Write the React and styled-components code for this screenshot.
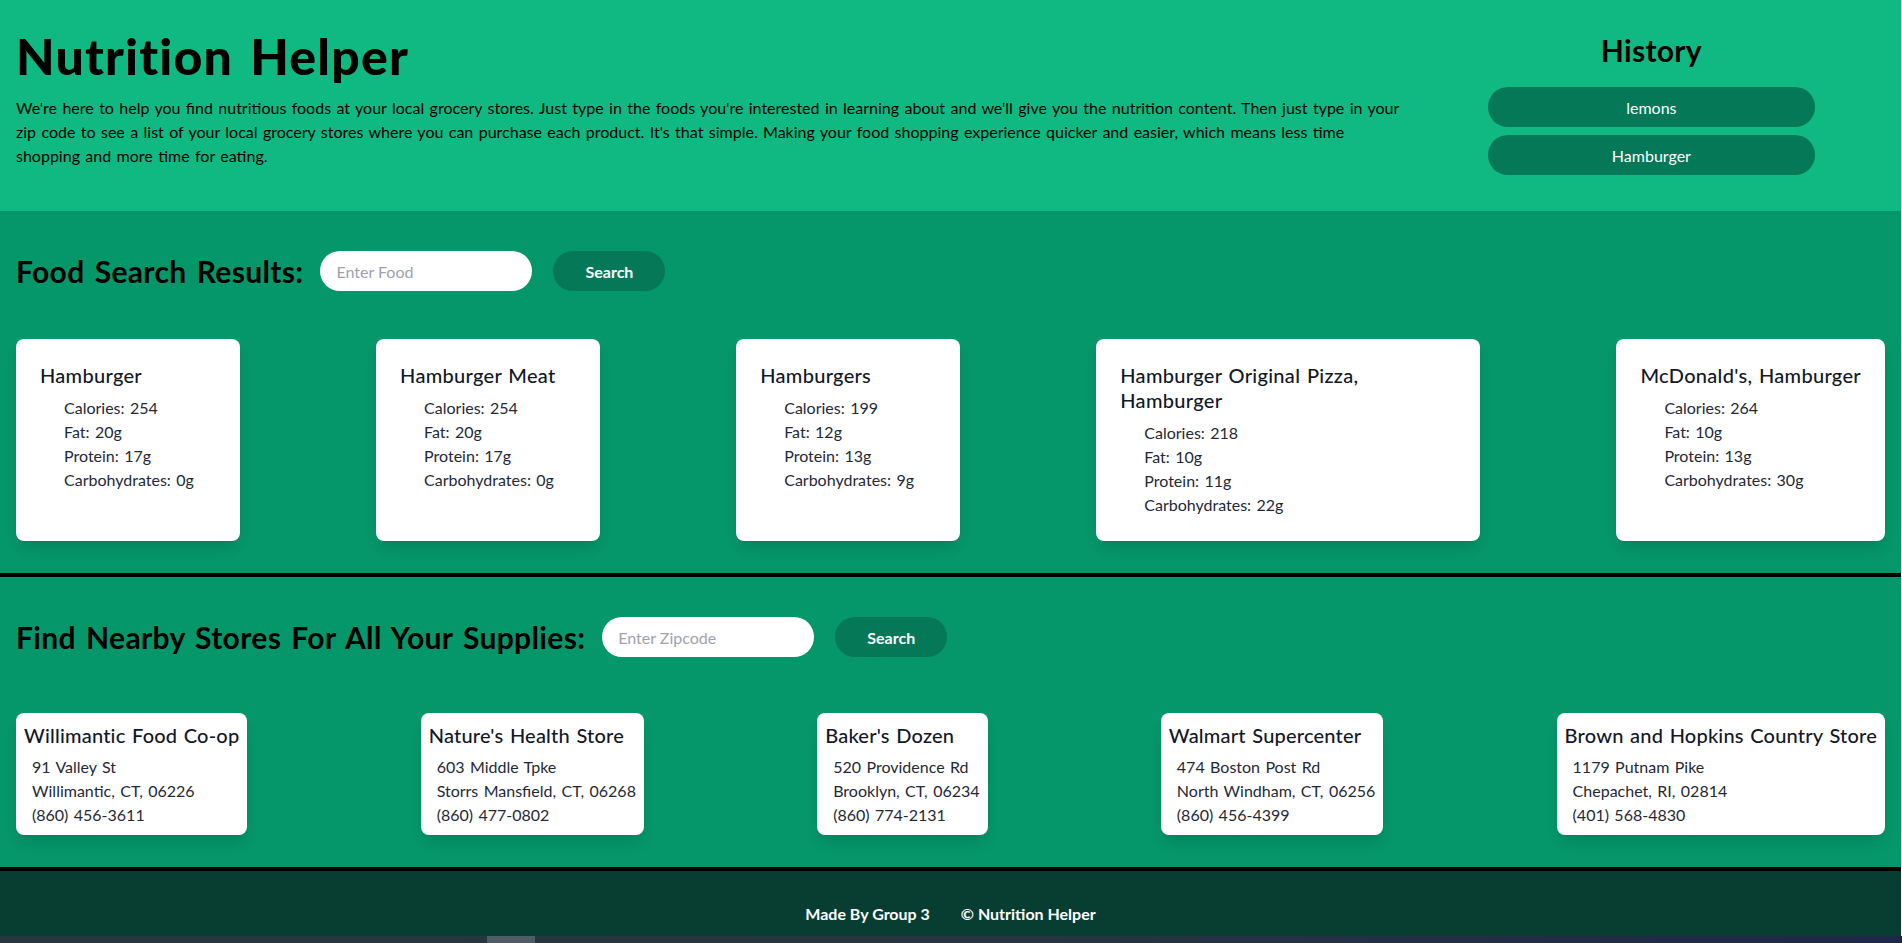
import React from "react";
import styled, { createGlobalStyle } from "styled-components";

const foods = [
  { name: "Hamburger", calories: 254, fat: 20, protein: 17, carbs: 0 },
  { name: "Hamburger Meat", calories: 254, fat: 20, protein: 17, carbs: 0 },
  { name: "Hamburgers", calories: 199, fat: 12, protein: 13, carbs: 9 },
  {
    name: "Hamburger Original Pizza, Hamburger",
    calories: 218,
    fat: 10,
    protein: 11,
    carbs: 22,
  },
  { name: "McDonald's, Hamburger", calories: 264, fat: 10, protein: 13, carbs: 30 },
];

const stores = [
  {
    name: "Willimantic Food Co-op",
    street: "91 Valley St",
    city: "Willimantic, CT, 06226",
    phone: "(860) 456-3611",
  },
  {
    name: "Nature's Health Store",
    street: "603 Middle Tpke",
    city: "Storrs Mansfield, CT, 06268",
    phone: "(860) 477-0802",
  },
  {
    name: "Baker's Dozen",
    street: "520 Providence Rd",
    city: "Brooklyn, CT, 06234",
    phone: "(860) 774-2131",
  },
  {
    name: "Walmart Supercenter",
    street: "474 Boston Post Rd",
    city: "North Windham, CT, 06256",
    phone: "(860) 456-4399",
  },
  {
    name: "Brown and Hopkins Country Store",
    street: "1179 Putnam Pike",
    city: "Chepachet, RI, 02814",
    phone: "(401) 568-4830",
  },
];

const history = ["lemons", "Hamburger"];

function App() {
  return (
    <>
      <GlobalStyle />
      <Main>
        <Header>
          <Intro>
            <Title>Nutrition Helper</Title>
            <Blurb>
              We're here to help you find nutritious foods at your local grocery
              stores. Just type in the foods you're interested in learning about
              and we'll give you the nutrition content. Then just type in your zip
              code to see a list of your local grocery stores where you can
              purchase each product. It's that simple. Making your food shopping
              experience quicker and easier, which means less time shopping and
              more time for eating.
            </Blurb>
          </Intro>
          <History>
            <HistoryTitle>History</HistoryTitle>
            {history.map((item) => (
              <HistoryButton key={item}>{item}</HistoryButton>
            ))}
          </History>
        </Header>

        <Section>
          <SearchRow $gap={48}>
            <SectionTitle>Food Search Results:</SectionTitle>
            <SearchInput placeholder="Enter Food" />
            <SearchButton>Search</SearchButton>
          </SearchRow>
          <CardRow>
            {foods.map((food) => (
              <FoodCard key={food.name}>
                <FoodName>{food.name}</FoodName>
                <NutrientList>
                  <li>Calories: {food.calories}</li>
                  <li>Fat: {food.fat}g</li>
                  <li>Protein: {food.protein}g</li>
                  <li>Carbohydrates: {food.carbs}g</li>
                </NutrientList>
              </FoodCard>
            ))}
          </CardRow>
        </Section>

        <Section>
          <SearchRow $gap={56}>
            <SectionTitle>Find Nearby Stores For All Your Supplies:</SectionTitle>
            <SearchInput placeholder="Enter Zipcode" />
            <SearchButton>Search</SearchButton>
          </SearchRow>
          <CardRow>
            {stores.map((store) => (
              <StoreCard key={store.name}>
                <StoreName>{store.name}</StoreName>
                <AddressList>
                  <li>{store.street}</li>
                  <li>{store.city}</li>
                  <li>{store.phone}</li>
                </AddressList>
              </StoreCard>
            ))}
          </CardRow>
        </Section>

        <Footer>
          <span>Made By Group 3</span>
          <span>© Nutrition Helper</span>
        </Footer>
      </Main>
      <Taskbar>
        <TaskbarThumb />
      </Taskbar>
    </>
  );
}

const GlobalStyle = createGlobalStyle`
  body {
    margin: 0;
    font-family: Lato, "Open Sans", "Noto Sans", sans-serif;
    word-spacing: 1.3px;
    color: #000;
    background: #fff;
  }
  * {
    box-sizing: border-box;
  }
`;

const Main = styled.div`
  width: 1901px;
`;

const Header = styled.header`
  display: grid;
  grid-template-columns: 3fr 1fr;
  padding: 32px 16px 36px;
  background: #10b981;
`;

const Intro = styled.div``;

const Title = styled.h1`
  margin: 0 0 16px;
  font-size: 50px;
  line-height: 48px;
  font-weight: 900;
  letter-spacing: 1.2px;
  word-spacing: 4px;
`;

const Blurb = styled.p`
  margin: 0;
  font-size: 16px;
  line-height: 24px;
  padding-right: 6px;
`;

const History = styled.div`
  display: flex;
  flex-direction: column;
  align-items: center;
  gap: 8px;
`;

const HistoryTitle = styled.h2`
  margin: 0 0 11px;
  font-size: 30px;
  line-height: 36px;
  font-weight: 700;
  letter-spacing: 0.3px;
`;

const HistoryButton = styled.button`
  width: 70%;
  height: 40px;
  border: none;
  border-radius: 9999px;
  background: #047857;
  color: #fff;
  font-family: inherit;
  font-size: 16px;
  word-spacing: inherit;
`;

const Section = styled.section`
  padding: 40px 16px 32px;
  background: #059669;
  border-bottom: 4px solid #000;
`;

const SearchRow = styled.div`
  display: flex;
  align-items: center;
  margin-bottom: ${(p) => p.$gap}px;
`;

const SectionTitle = styled.h2`
  margin: 0 17px 0 0;
  font-size: 30px;
  line-height: 36px;
  font-weight: 700;
  letter-spacing: 0.35px;
  word-spacing: 2.5px;
`;

const SearchInput = styled.input`
  width: 212px;
  height: 40px;
  padding: 0 16px;
  border: none;
  border-radius: 9999px;
  background: #fff;
  font-family: inherit;
  font-size: 16px;
  outline: none;

  &::placeholder {
    color: #9ca3af;
  }
`;

const SearchButton = styled.button`
  margin-left: 21px;
  width: 112px;
  height: 40px;
  border: none;
  border-radius: 9999px;
  background: #047857;
  color: #fff;
  font-family: inherit;
  font-size: 16px;
  font-weight: 700;
`;

const CardRow = styled.div`
  display: flex;
  justify-content: space-between;
  align-items: stretch;
`;

const FoodCard = styled.div`
  min-width: 224px;
  max-width: 384px;
  padding: 24px;
  background: #fff;
  border-radius: 8px;
  box-shadow: 0 10px 15px -3px rgba(0, 0, 0, 0.1),
    0 4px 6px -4px rgba(0, 0, 0, 0.1);
`;

const FoodName = styled.h3`
  margin: 0 0 8px;
  font-size: 20px;
  line-height: 25px;
  font-weight: 500;
  letter-spacing: 0.3px;
  color: #111827;
`;

const NutrientList = styled.ul`
  margin: 0;
  padding-left: 24px;
  list-style: none;
  font-size: 16px;
  line-height: 24px;
  color: #1f2937;
`;

const StoreCard = styled.div`
  padding: 8px;
  background: #fff;
  border-radius: 8px;
  box-shadow: 0 10px 15px -3px rgba(0, 0, 0, 0.1),
    0 4px 6px -4px rgba(0, 0, 0, 0.1);
`;

const StoreName = styled.h3`
  margin: 0 0 6px;
  font-size: 20px;
  line-height: 28px;
  font-weight: 500;
  letter-spacing: 0.2px;
  color: #111827;
`;

const AddressList = styled.ul`
  margin: 0;
  padding-left: 8px;
  list-style: none;
  font-size: 16px;
  line-height: 24px;
  color: #1f2937;
`;

const Footer = styled.footer`
  display: flex;
  justify-content: center;
  gap: 31px;
  padding: 33px 16px 40px;
  background: #083d32;
  color: #fff;
  font-size: 16px;
  line-height: 20px;
  font-weight: 700;
  word-spacing: 0;
`;

const Taskbar = styled.div`
  position: fixed;
  left: 0;
  right: 0;
  bottom: 0;
  height: 7px;
  background: linear-gradient(90deg, #27373f 0%, #263541 55%, #1d2848 100%);
`;

const TaskbarThumb = styled.div`
  width: 48px;
  height: 100%;
  margin-left: 487px;
  background: #4f5c66;
`;

export default App;
